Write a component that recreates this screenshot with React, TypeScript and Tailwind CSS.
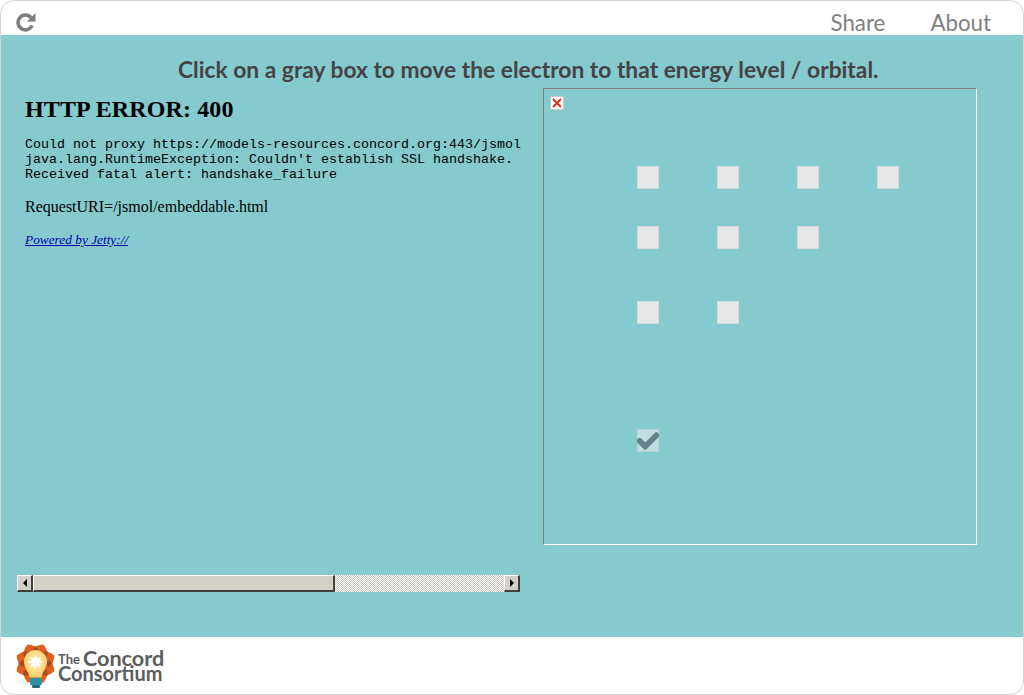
import { FaCheck } from "react-icons/fa";

const rows = [
  { count: 4, gap: "mt-0" },
  { count: 3, gap: "mt-[37px]" },
  { count: 2, gap: "mt-[52px]" },
];

function EnergyBox() {
  return <div className="w-[22px] h-[23px] bg-[#e6e7e8] border border-[#d4d8d9]" />;
}

function ScrollButton({ dir }: { dir: "left" | "right" }) {
  return (
    <div className="w-[16px] h-full bg-[#d4d0c8] border-t border-l border-t-white border-l-white border-r-2 border-b-2 border-r-[#404040] border-b-[#404040] flex items-center justify-center">
      {dir === "left" ? (
        <div className="w-0 h-0 border-y-[4px] border-y-transparent border-r-[4px] border-r-black" />
      ) : (
        <div className="w-0 h-0 border-y-[4px] border-y-transparent border-l-[4px] border-l-black" />
      )}
    </div>
  );
}

function ReloadIcon() {
  return (
    <svg width="20" height="20" viewBox="0 0 20 20" fill="none">
      <path d="M15 5.5 A7.4 7.4 0 1 0 16.2 13.5" stroke="#7f7f7f" strokeWidth="3.6" />
      <path d="M19.5 1 L19.5 9.5 L11 9.5 Z" fill="#7f7f7f" />
    </svg>
  );
}

function Logo() {
  const petals = [0, 45, 90, 135, 180, 225, 270, 315];
  return (
    <svg width="42" height="46" viewBox="0 0 42 46">
      <defs>
        <radialGradient id="bulb" cx="50%" cy="45%" r="60%">
          <stop offset="0%" stopColor="#fff3c4" />
          <stop offset="100%" stopColor="#f8c95c" />
        </radialGradient>
      </defs>
      <g transform="translate(20.5 20.5)">
        {petals.map((a) => (
          <path key={a} transform={`rotate(${a + 22.5})`} d="M-9 -10 Q-7 -17 0 -20.5 Q7 -17 9 -10 L4 -4 L-4 -4 Z" fill="#e0601f" />
        ))}
        {petals.map((a) => (
          <path key={a} transform={`rotate(${a})`} d="M0 -17 L3.5 -13 L0 -9 L-3.5 -13 Z" fill="#a94a20" />
        ))}
        <path d="M-11.5 -2 A11.5 11.5 0 1 1 11.5 -2 C11.5 4 7 8 6 14 L-6 14 C-7 8 -11.5 4 -11.5 -2 Z" fill="url(#bulb)" />
        <path d="M0 -9 L1.5 -5 L5.5 -7 L3.5 -3 L8 -1.5 L3.5 0 L5.5 4 L1.5 2 L0 6.5 L-1.5 2 L-5.5 4 L-3.5 0 L-8 -1.5 L-3.5 -3 L-5.5 -7 L-1.5 -5 Z" fill="#ffffff" />
      </g>
      <rect x="15" y="35" width="12" height="7" rx="1" fill="#2f8fa3" />
      <rect x="17" y="42" width="8" height="3" rx="1" fill="#1f6e80" />
    </svg>
  );
}

export default function App() {
  return (
    <div className="w-[1024px] h-[695px] flex flex-col border border-[#d3d3d3] rounded-[14px] overflow-hidden bg-white font-['Lato',sans-serif]">
      <header className="h-[34px] flex items-center justify-between pl-[15px] pr-[32px]">
        <div className="mt-[8px]">
          <ReloadIcon />
        </div>
        <nav className="flex gap-[45px] text-[22.3px] leading-none text-[#7f7f7f] mt-[11px]">
          <span>Share</span>
          <span>About</span>
        </nav>
      </header>

      <main className="flex-1 bg-[#84cace] flex flex-col">
        <h1 className="pl-[177px] pt-[20px] text-[22.8px] leading-[29px] font-bold text-[#444444]">
          Click on a gray box to move the electron to that energy level / orbital.
        </h1>

        <div className="flex mt-[4px] pl-[16px]">
          <div className="w-[526px]">
            <div className="h-[487px] pl-[8px] pt-[7px] overflow-hidden font-['Liberation_Serif',serif] text-black">
              <h2 className="text-[24px] leading-[28px] font-bold tracking-[0.13px]">HTTP ERROR: 400</h2>
              <pre className="mt-[14px] font-['Liberation_Mono',monospace] text-[13.33px] leading-[15px] whitespace-pre">
                {"Could not proxy https://models-resources.concord.org:443/jsmol\njava.lang.RuntimeException: Couldn't establish SSL handshake.\nReceived fatal alert: handshake_failure"}
              </pre>
              <p className="mt-[16px] text-[16px] leading-[18px]">RequestURI=/jsmol/embeddable.html</p>
              <p className="mt-[17px] text-[13.33px] leading-[14px] italic">
                <a href="#" className="underline text-[#0000aa]">Powered by Jetty://</a>
              </p>
            </div>
            <div className="w-[503px] h-[17px] flex">
              <ScrollButton dir="left" />
              <div className="w-[302px] h-full bg-[#d4d0c8] border-t border-l border-t-white border-l-white border-r-2 border-b-2 border-r-[#404040] border-b-[#404040]" />
              <div className="flex-1 h-full bg-[repeating-conic-gradient(#c9c6be_0_25%,#ffffff_0_50%)] bg-[length:2px_2px]" />
              <ScrollButton dir="right" />
            </div>
          </div>

          <div className="w-[434px] h-[457px] border border-t-[#808080] border-l-[#808080] border-r-white border-b-white pt-[7px] pl-[6px]">
            <div className="w-[14px] h-[14px] bg-white border border-[#c8c8c8] flex items-center justify-center">
              <svg width="10" height="10" viewBox="0 0 10 10">
                <path d="M1 1 L9 9 M9 1 L1 9" stroke="#e0301e" strokeWidth="2" />
              </svg>
            </div>
            <div className="pl-[87px] pt-[56px]">
              {rows.map((row) => (
                <div key={row.count} className={`flex gap-[58px] ${row.gap}`}>
                  {Array.from({ length: row.count }).map((_, i) => (
                    <EnergyBox key={i} />
                  ))}
                </div>
              ))}
              <div className="mt-[105px] w-[22px] h-[23px] bg-[#c0dcdf] border border-[#b4d4d7] flex items-center justify-center">
                <FaCheck className="w-[22px] h-[22px] shrink-0 text-[#66808a] stroke-current stroke-[30]" />
              </div>
            </div>
          </div>
        </div>
      </main>

      <footer className="h-[57px] flex items-center pl-[14px] gap-[1px]">
        <Logo />
        <div className="text-[#5c5d5f] font-bold">
          <div className="flex items-end gap-[3px] h-[16px]">
            <span className="text-[13px] leading-[14px]">The</span>
            <span className="text-[21.6px] leading-[16px]">Concord</span>
          </div>
          <div className="text-[20px] leading-[15px]">Consortium</div>
        </div>
      </footer>
    </div>
  );
}
